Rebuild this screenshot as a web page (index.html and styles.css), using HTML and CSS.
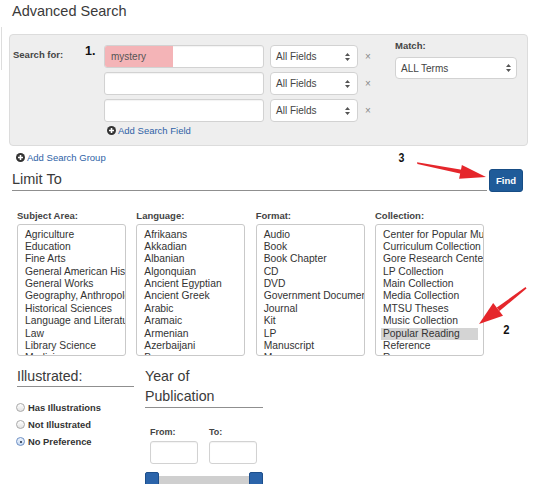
FILE: index.html
```html
<!DOCTYPE html>
<html>
<head>
<meta charset="utf-8">
<link rel="stylesheet" href="styles.css">
</head>
<body>
<div class="edge"></div>
<div class="wrap">
  <h1 class="title">Advanced Search</h1>

  <div class="panel">
    <div class="sf-label">Search for:</div>
    <div class="fields">
      <div class="row">
        <div class="input"><span class="hl">mystery</span></div>
        <div class="select"><span>All Fields</span><svg class="caret" width="5" height="8" viewBox="0 0 5 8"><path d="M2.5 0L5 3H0z M2.5 8L0 5h5z" fill="#555"/></svg></div>
        <span class="x">×</span>
      </div>
      <div class="row">
        <div class="input"></div>
        <div class="select"><span>All Fields</span><svg class="caret" width="5" height="8" viewBox="0 0 5 8"><path d="M2.5 0L5 3H0z M2.5 8L0 5h5z" fill="#555"/></svg></div>
        <span class="x">×</span>
      </div>
      <div class="row">
        <div class="input"></div>
        <div class="select"><span>All Fields</span><svg class="caret" width="5" height="8" viewBox="0 0 5 8"><path d="M2.5 0L5 3H0z M2.5 8L0 5h5z" fill="#555"/></svg></div>
        <span class="x">×</span>
      </div>
      <div class="add add-field"><svg class="plus" width="9" height="9" viewBox="0 0 9 9"><circle cx="4.5" cy="4.5" r="4.5" fill="#333"/><path d="M4.5 2v5M2 4.5h5" stroke="#fff" stroke-width="1.6"/></svg>Add Search Field</div>
    </div>
    <div class="match">
      <div class="lbl">Match:</div>
      <div class="select wide"><span>ALL Terms</span><svg class="caret" width="5" height="8" viewBox="0 0 5 8"><path d="M2.5 0L5 3H0z M2.5 8L0 5h5z" fill="#555"/></svg></div>
    </div>
  </div>

  <div class="add add-group"><svg class="plus" width="9" height="9" viewBox="0 0 9 9"><circle cx="4.5" cy="4.5" r="4.5" fill="#333"/><path d="M4.5 2v5M2 4.5h5" stroke="#fff" stroke-width="1.6"/></svg>Add Search Group</div>

  <div class="limit-row">
    <h2 class="limit">Limit To</h2>
    <div class="find">Find</div>
  </div>

  <div class="lists">
    <div class="col">
      <div class="lbl">Subject Area:</div>
      <div class="listbox">
        <div class="opt">Agriculture</div>
        <div class="opt">Education</div>
        <div class="opt">Fine Arts</div>
        <div class="opt">General American History</div>
        <div class="opt">General Works</div>
        <div class="opt">Geography, Anthropology</div>
        <div class="opt">Historical Sciences</div>
        <div class="opt">Language and Literature</div>
        <div class="opt">Law</div>
        <div class="opt">Library Science</div>
        <div class="opt">Medicine</div>
      </div>
    </div>
    <div class="col">
      <div class="lbl">Language:</div>
      <div class="listbox">
        <div class="opt">Afrikaans</div>
        <div class="opt">Akkadian</div>
        <div class="opt">Albanian</div>
        <div class="opt">Algonquian</div>
        <div class="opt">Ancient Egyptian</div>
        <div class="opt">Ancient Greek</div>
        <div class="opt">Arabic</div>
        <div class="opt">Aramaic</div>
        <div class="opt">Armenian</div>
        <div class="opt">Azerbaijani</div>
        <div class="opt">Basque</div>
      </div>
    </div>
    <div class="col">
      <div class="lbl">Format:</div>
      <div class="listbox">
        <div class="opt">Audio</div>
        <div class="opt">Book</div>
        <div class="opt">Book Chapter</div>
        <div class="opt">CD</div>
        <div class="opt">DVD</div>
        <div class="opt">Government Document</div>
        <div class="opt">Journal</div>
        <div class="opt">Kit</div>
        <div class="opt">LP</div>
        <div class="opt">Manuscript</div>
        <div class="opt">Map</div>
      </div>
    </div>
    <div class="col">
      <div class="lbl">Collection:</div>
      <div class="listbox">
        <div class="opt">Center for Popular Music</div>
        <div class="opt">Curriculum Collection</div>
        <div class="opt">Gore Research Center</div>
        <div class="opt">LP Collection</div>
        <div class="opt">Main Collection</div>
        <div class="opt">Media Collection</div>
        <div class="opt">MTSU Theses</div>
        <div class="opt">Music Collection</div>
        <div class="opt sel">Popular Reading</div>
        <div class="opt">Reference</div>
        <div class="opt">Reserve</div>
      </div>
    </div>
  </div>

  <div class="bottom">
    <div class="illus">
      <h3 class="sub">Illustrated:</h3>
      <div class="radios">
        <div class="radio"><span class="dot"></span>Has Illustrations</div>
        <div class="radio"><span class="dot"></span>Not Illustrated</div>
        <div class="radio"><span class="dot on"></span>No Preference</div>
      </div>
    </div>
    <div class="year">
      <h3 class="sub">Year of<br>Publication</h3>
      <div class="range">
        <div class="fld"><div class="lbl">From:</div><div class="input small"></div></div>
        <div class="fld"><div class="lbl">To:</div><div class="input small"></div></div>
      </div>
      <div class="slider"><span class="handle"></span><span class="track"></span><span class="handle"></span></div>
    </div>
  </div>
</div>

<div class="note n1">1.</div>
<div class="note n3">3</div>
<div class="note n2">2</div>
<svg class="arrows" width="536" height="484" viewBox="0 0 536 484">
  <polygon points="417,162.2 417.4,164 461,173.8 461.8,169.8" fill="#e5262b"/>
  <polygon points="486,177 461.9,164.9 459.1,178.7" fill="#e5262b"/>
  <polygon points="525.5,287 526.5,288.6 499.5,311 496.8,307.6" fill="#e5262b"/>
  <polygon points="479,324 503,315.8 493.2,303" fill="#e5262b"/>
</svg>
</body>
</html>
```
FILE: styles.css
```css
* { box-sizing: border-box; }
html, body { margin: 0; padding: 0; }
body {
  width: 536px;
  height: 484px;
  overflow: hidden;
  position: relative;
  background: #fff;
  font-family: "Liberation Sans", Arial, Helvetica, sans-serif;
  color: #333;
}
.edge {
  position: absolute;
  left: 0;
  top: 27px;
  width: 2px;
  height: 43px;
  border-right: 1px solid #ddd;
}
.wrap { padding: 3px 0 0 9px; }

.title {
  margin: 0;
  padding-left: 3px;
  font-size: 14.5px;
  line-height: 17px;
  font-weight: normal;
  color: #3a3a3a;
}

.panel {
  margin-top: 14px;
  width: 519px;
  height: 112px;
  background: #eeeeee;
  border: 1px solid #dcdcdc;
  border-radius: 4px;
  padding: 10px 0 0 3px;
  display: flex;
  align-items: flex-start;
}
.sf-label {
  width: 91px;
  margin-top: 3.5px;
  font-size: 9.5px;
  line-height: 11px;
  font-weight: bold;
  color: #444;
}
.fields {
  width: 281px;
  display: flex;
  flex-direction: column;
  gap: 4px;
}
.row {
  display: flex;
  align-items: center;
  height: 23px;
}
.input {
  width: 160px;
  height: 23px;
  background: #fff;
  border: 1px solid #d2d2d2;
  border-radius: 3px;
  box-shadow: inset 0 1px 1px rgba(0,0,0,0.05);
  overflow: hidden;
}
.hl {
  display: block;
  width: 68px;
  height: 100%;
  background: #f4b4b7;
  padding-left: 6px;
  font-size: 10px;
  line-height: 21px;
  color: #555;
}
.select {
  width: 88px;
  height: 23px;
  margin-left: 6px;
  background: #fff;
  border: 1px solid #d2d2d2;
  border-radius: 4px;
  padding: 0 7px 0 5px;
  display: flex;
  align-items: center;
  justify-content: space-between;
  font-size: 10px;
  color: #444;
}
.select.wide { width: 122px; height: 22px; margin-left: 0; padding: 0 5px 0 5px; }
.caret { display: block; }
.x {
  margin-left: 7px;
  font-size: 10px;
  color: #888;
  line-height: 10px;
}
.add {
  display: flex;
  align-items: center;
  gap: 2px;
  font-size: 9.5px;
  line-height: 11px;
  color: #2e62a6;
}
.plus { display: block; flex: none; }
.add-field { margin-top: -1.5px; padding-left: 3px; }
.match {
  margin-left: 10px;
  width: 122px;
  margin-top: -5px;
}
.lbl {
  font-size: 9.5px;
  line-height: 12px;
  font-weight: bold;
  color: #444;
}
.match .select { margin-top: 5px; }

.add-group { margin-top: 5.5px; padding-left: 7px; }

.limit-row {
  margin-top: 8px;
  display: flex;
  align-items: flex-start;
  padding-left: 3px;
  width: 514px;
}
.limit {
  flex: 1;
  margin: 0 2px 0 0;
  font-size: 14.5px;
  line-height: 17px;
  font-weight: normal;
  color: #3a3a3a;
  padding-bottom: 2px;
  border-bottom: 1px solid #8f8f8f;
}
.find {
  width: 34px;
  height: 23px;
  margin-top: -1.5px;
  background: #1f5b99;
  border: 1px solid #174d85;
  border-radius: 3px;
  color: #fff;
  font-size: 9.5px;
  font-weight: bold;
  line-height: 21px;
  text-align: center;
}

.lists {
  margin-top: 17.5px;
  padding-left: 8px;
  display: grid;
  grid-template-columns: repeat(4, 109px);
  column-gap: 10.33px;
}
.lists .lbl { line-height: 11px; }
.listbox {
  margin-top: 3.5px;
  height: 132px;
  border: 1px solid #c9c9c9;
  border-radius: 3px;
  background: #fff;
  padding: 3.5px 5px 0 5px;
  overflow: hidden;
}
.opt {
  font-size: 10.3px;
  line-height: 12.4px;
  height: 12.4px;
  padding-left: 2px;
  white-space: nowrap;
  color: #333;
}
.opt.sel { background: #d4d4d4; }

.bottom {
  margin-top: 9.5px;
  padding-left: 8px;
  display: flex;
  align-items: flex-start;
}
.sub {
  margin: 0;
  font-size: 14.2px;
  line-height: 20.5px;
  font-weight: normal;
  color: #3a3a3a;
  border-bottom: 1px solid #8f8f8f;
}
.illus { width: 117px; }
.radios { margin-top: 12px; margin-left: -1px; }
.radio {
  display: flex;
  align-items: center;
  height: 17px;
  font-size: 9.4px;
  font-weight: bold;
  color: #333;
}
.dot {
  width: 9px;
  height: 9px;
  border-radius: 50%;
  border: 1px solid #a9a9a9;
  background: linear-gradient(#fff, #e3e3e3);
  margin-right: 3px;
  position: relative;
  flex: none;
}
.dot.on { border-color: #6d8fc4; background: linear-gradient(#eef4fc, #c8daf2); }
.dot.on::after {
  content: "";
  position: absolute;
  left: 2.5px;
  top: 2.5px;
  width: 2px;
  height: 2px;
  border-radius: 50%;
  background: #1a2a44;
}
.year { width: 118px; margin-left: 11px; }
.range {
  display: flex;
  gap: 11px;
  padding-left: 5px;
}
.fld .lbl { margin-top: 19px; font-size: 9px; line-height: 11px; }
.input.small { width: 48px; margin-top: 3.5px; }
.slider {
  margin-top: 7.5px;
  display: flex;
  align-items: flex-start;
  height: 14px;
}
.handle {
  width: 14px;
  height: 14px;
  background: #2b64aa;
  border: 1px solid #1d4f8c;
  border-radius: 2px 2px 0 0;
  flex: none;
}
.track {
  flex: 1;
  height: 10px;
  margin-top: 4px;
  background: #cfcfcf;
}

.note {
  position: absolute;
  font-family: "Liberation Sans", Arial, sans-serif;
  font-weight: bold;
  color: #111;
  line-height: 12px;
}
.n1 { left: 85px; top: 45px; font-size: 12.5px; }
.n3 { left: 398px; top: 151.5px; font-size: 12.5px; transform: scaleX(0.85); }
.n2 { left: 503px; top: 323.5px; font-size: 12.5px; transform: scaleX(0.9); }
.arrows {
  position: absolute;
  left: 0;
  top: 0;
  pointer-events: none;
}
```
